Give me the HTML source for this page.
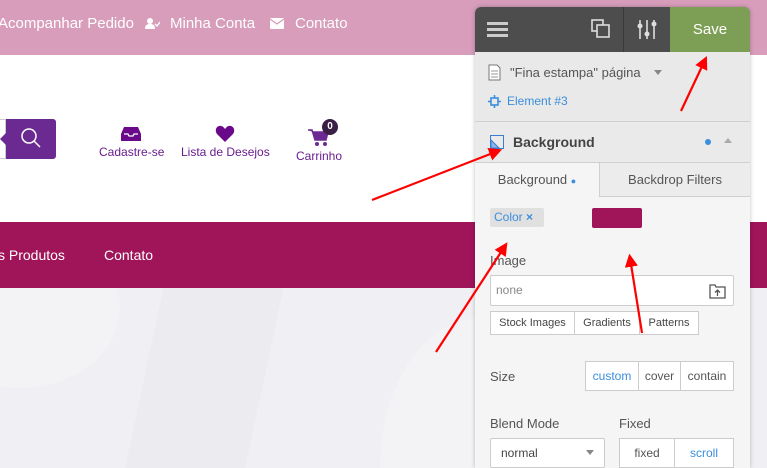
<!DOCTYPE html>
<html><head><meta charset="utf-8"><style>
*{box-sizing:border-box;margin:0;padding:0}
html,body{width:767px;height:468px;overflow:hidden}
body{position:relative;font-family:"Liberation Sans",Arial,sans-serif;background:#f1f0f4}
.abs{position:absolute}
.top{left:0;top:0;width:767px;height:55px;background:#d79dbb;color:#fff;font-size:15px}
.white{left:0;top:55px;width:767px;height:167px;background:#fff}
.mag{left:0;top:222px;width:767px;height:66px;background:#a0145a;color:#fff;font-size:14px}
.lower{left:0;top:288px;width:767px;height:180px;background:#f0eff3;overflow:hidden}
.pl{color:#6a1d8e;font-size:12px}
.panel{left:475px;top:7px;width:275px;height:461px;background:#f5f5f5;border-radius:6px 6px 0 0;overflow:hidden;box-shadow:0 0 4px rgba(0,0,0,.25);color:#444;font-size:13px}
.hd{left:0;top:0;width:275px;height:45px;background:#4d4d4d}
.btn{border:1px solid #ccc;background:#fff;height:24px;font-size:11px;display:flex;align-items:center;justify-content:center}
</style></head><body>
<div class="abs top">
 <span class="abs" style="left:-2px;top:15px">Acompanhar Pedido</span>
 <svg class="abs" style="left:144px;top:17px" width="16" height="13"><circle cx="6" cy="4" r="3" fill="#fff"/><path d="M1 12c0-4 2-5 5-5s5 1 5 5z" fill="#fff"/><path d="M11 7l2 2 3-4" stroke="#fff" stroke-width="1.3" fill="none"/></svg>
 <span class="abs" style="left:170px;top:15px">Minha Conta</span>
 <svg class="abs" style="left:270px;top:18px" width="14" height="11"><rect width="14" height="11" rx="1" fill="#fff"/><path d="M0 1l7 5 7-5" stroke="#d79dbb" stroke-width="1.3" fill="none"/></svg>
 <span class="abs" style="left:295px;top:15px">Contato</span>
</div>
<div class="abs white">
 <div class="abs" style="left:0;top:64px;width:6px;height:40px;border:1px solid #ccc;border-left:none"></div>
 <div class="abs" style="left:6px;top:64px;width:50px;height:40px;background:#6a2a92;border-radius:0 3px 3px 0"></div>
 <div class="abs" style="top:78px;width:0;height:0;border:6px solid transparent;border-right-color:#6a2a92;left:-6px"></div>
 <svg class="abs" style="left:19px;top:71px" width="24" height="24"><circle cx="10" cy="10" r="7" stroke="#fff" stroke-width="1.5" fill="none"/><path d="M15 15l6 6" stroke="#fff" stroke-width="1.5"/></svg>
 <svg class="abs" style="left:121px;top:72px" width="20" height="14"><path d="M3 0h14l3 7v7H0V7z" fill="#6a0a8a"/><path d="M3 7h4l1 2h4l1-2h4" stroke="#fff" stroke-width="1.3" fill="none"/></svg>
 <span class="abs pl" style="left:99px;top:90px">Cadastre-se</span>
 <svg class="abs" style="left:215px;top:70px" width="20" height="18"><path d="M10 17L2 9C-1 5 2 0 6 1c2 0 3 2 4 3 1-1 2-3 4-3 4-1 7 4 4 8z" fill="#6a0a8a"/></svg>
 <span class="abs pl" style="left:181px;top:90px">Lista de Desejos</span>
 <svg class="abs" style="left:308px;top:73px" width="22" height="20"><path d="M0 2h4l3 10h11l2-8H5" fill="#6a2a92" stroke="#6a2a92" stroke-width="1.5"/><circle cx="9" cy="16" r="2" fill="#6a2a92"/><circle cx="17" cy="16" r="2" fill="#6a2a92"/></svg>
 <div class="abs" style="left:322px;top:64px;width:16px;height:16px;border-radius:50%;background:#3a1f45;color:#fff;font-size:10px;font-weight:bold;text-align:center;line-height:16px">0</div>
 <span class="abs pl" style="left:296px;top:94px">Carrinho</span>
</div>
<div class="abs mag"><span class="abs" style="left:-2px;top:25px">s Produtos</span><span class="abs" style="left:104px;top:25px">Contato</span></div>
<div class="abs lower">
 <div class="abs" style="left:-80px;top:-60px;width:200px;height:160px;border-radius:50%;background:#f3f3f5"></div>
 <div class="abs" style="left:140px;top:-20px;width:120px;height:260px;background:#ecebf0;transform:skewX(-12deg)"></div>
 <div class="abs" style="left:380px;top:30px;width:200px;height:300px;border-radius:50%;background:#f3f3f5"></div>
</div>
<div class="abs panel">
 <div class="abs hd">
  <div class="abs" style="left:12px;top:15px;width:21px;height:3px;background:#ccc;box-shadow:0 6px 0 #ccc,0 12px 0 #ccc"></div>
  <svg class="abs" style="left:116px;top:12px" width="20" height="20"><rect x="1" y="1" width="11" height="11" fill="none" stroke="#ddd" stroke-width="1.6"/><rect x="6" y="6" width="12" height="12" fill="#4d4d4d" stroke="#ddd" stroke-width="1.6"/></svg>
  <div class="abs" style="left:148px;top:0;width:1px;height:45px;background:#3a3a3a"></div>
  <svg class="abs" style="left:161px;top:12px" width="22" height="22"><path d="M4 1v19M11 1v19M18 1v19" stroke="#ddd" stroke-width="1.6"/><circle cx="4" cy="7" r="2.5" fill="#ddd"/><circle cx="11" cy="15" r="2.5" fill="#ddd"/><circle cx="18" cy="5" r="2.5" fill="#ddd"/></svg>
  <div class="abs" style="left:195px;top:0;width:80px;height:45px;background:#7d9f55;color:#fff;font-size:15px;text-align:center;line-height:45px">Save</div>
 </div>
 <div class="abs" style="left:0;top:45px;width:275px;height:70px;background:#e9e9e9;border-bottom:1px solid #d0d0d0"></div>
 <svg class="abs" style="left:13px;top:57px" width="13" height="17"><path d="M1 1h8l3 3v12H1z" fill="#fff" stroke="#777"/><path d="M3 7h7M3 10h7M3 13h7" stroke="#999"/></svg>
 <span class="abs" style="left:35px;top:58px;color:#555;font-size:13px">"Fina estampa" página</span>
 <div class="abs" style="left:179px;top:63px;border:4px solid transparent;border-top:5px solid #888"></div>
 <svg class="abs" style="left:13px;top:88px" width="13" height="13"><rect x="3" y="3" width="7" height="7" fill="none" stroke="#3a8edc" stroke-width="1.6"/><path d="M6.5 0v3M6.5 10v3M0 6.5h3M10 6.5h3" stroke="#3a8edc" stroke-width="1.6"/></svg>
 <span class="abs" style="left:32px;top:87px;color:#3a8edc;font-size:12px">Element #3</span>
 <div class="abs" style="left:0;top:115px;width:275px;height:41px;background:#eaeaea;border-bottom:1px solid #d0d0d0"></div>
 <svg class="abs" style="left:15px;top:128px" width="14" height="14"><rect x="0.5" y="0.5" width="13" height="13" fill="none" stroke="#3a7ed0"/><path d="M1 5l8 8H1z" fill="#8ab4e8" stroke="#3a7ed0"/></svg>
 <span class="abs" style="left:38px;top:127px;font-size:14px;font-weight:bold;color:#444">Background</span>
 <div class="abs" style="left:230px;top:132px;width:6px;height:6px;border-radius:50%;background:#3a8edc"></div>
 <div class="abs" style="left:249px;top:131px;border:4px solid transparent;border-bottom:5px solid #aaa;border-top:none"></div>
 <div class="abs" style="left:0;top:156px;width:125px;height:34px;background:#f5f5f5;border-right:1px solid #d0d0d0;text-align:center;line-height:34px;font-size:13px;color:#555">Background <span style="color:#3a8edc;font-size:9px">●</span></div>
 <div class="abs" style="left:125px;top:156px;width:150px;height:34px;background:#ececec;border-bottom:1px solid #d0d0d0;text-align:center;line-height:34px;font-size:13px;color:#555">Backdrop Filters</div>
 <div class="abs" style="left:15px;top:201px;width:54px;height:19px;background:#e0e0e0;border-radius:2px;color:#3a8edc;font-size:12px;line-height:19px;padding-left:4px">Color <b style="color:#3a8edc">×</b></div>
 <div class="abs" style="left:117px;top:201px;width:50px;height:20px;background:#a0145a;border-radius:2px"></div>
 <span class="abs" style="left:15px;top:246px;color:#555">Image</span>
 <div class="abs" style="left:15px;top:268px;width:244px;height:31px;background:#fff;border:1px solid #ccc;border-radius:2px;color:#888;font-size:12px;line-height:29px;padding-left:5px">none</div>
 <svg class="abs" style="left:234px;top:276px" width="17" height="16"><path d="M1 2h5l1 2h9v11H1z" fill="#fff" stroke="#555" stroke-width="1.3"/><path d="M8.5 13V7M6 9.5l2.5-2.5 2.5 2.5" stroke="#555" stroke-width="1.3" fill="none"/></svg>
 <div class="abs btn" style="left:15px;top:304px;width:85px;color:#444">Stock Images</div>
 <div class="abs btn" style="left:99px;top:304px;width:66px;color:#444;border-left:1px solid #ccc">Gradients</div>
 <div class="abs btn" style="left:164px;top:304px;width:60px;color:#444">Patterns</div>
 <span class="abs" style="left:15px;top:362px;color:#555">Size</span>
 <div class="abs btn" style="left:110px;top:354px;width:54px;height:30px;font-size:12px;color:#3a8edc">custom</div>
 <div class="abs btn" style="left:163px;top:354px;width:43px;height:30px;font-size:12px;color:#555">cover</div>
 <div class="abs btn" style="left:205px;top:354px;width:54px;height:30px;font-size:12px;color:#555">contain</div>
 <span class="abs" style="left:15px;top:409px;color:#555">Blend Mode</span>
 <span class="abs" style="left:144px;top:409px;color:#555">Fixed</span>
 <div class="abs" style="left:15px;top:431px;width:115px;height:30px;background:#fff;border:1px solid #ccc;border-radius:2px;font-size:12px;line-height:28px;padding-left:10px;color:#444">normal</div>
 <div class="abs" style="left:111px;top:443px;border:4px solid transparent;border-top:5px solid #888"></div>
 <div class="abs btn" style="left:144px;top:431px;width:56px;height:30px;font-size:12px;color:#555">fixed</div>
 <div class="abs btn" style="left:199px;top:431px;width:60px;height:30px;font-size:12px;color:#3a8edc">scroll</div>
</div>
<svg class="abs" style="left:0;top:0" width="767" height="468">
 <defs><marker id="a" markerWidth="6" markerHeight="6" refX="4" refY="3" orient="auto" markerUnits="strokeWidth"><path d="M0 0L6 3L0 6z" fill="#f00"/></marker></defs>
 <g stroke="#f00" stroke-width="2.2" marker-end="url(#a)">
  <line x1="372" y1="200" x2="498" y2="151"/>
  <line x1="681" y1="111" x2="705" y2="60"/>
  <line x1="436" y1="352" x2="505" y2="246"/>
  <line x1="642" y1="333" x2="630" y2="258"/>
 </g>
</svg>
</body></html>
